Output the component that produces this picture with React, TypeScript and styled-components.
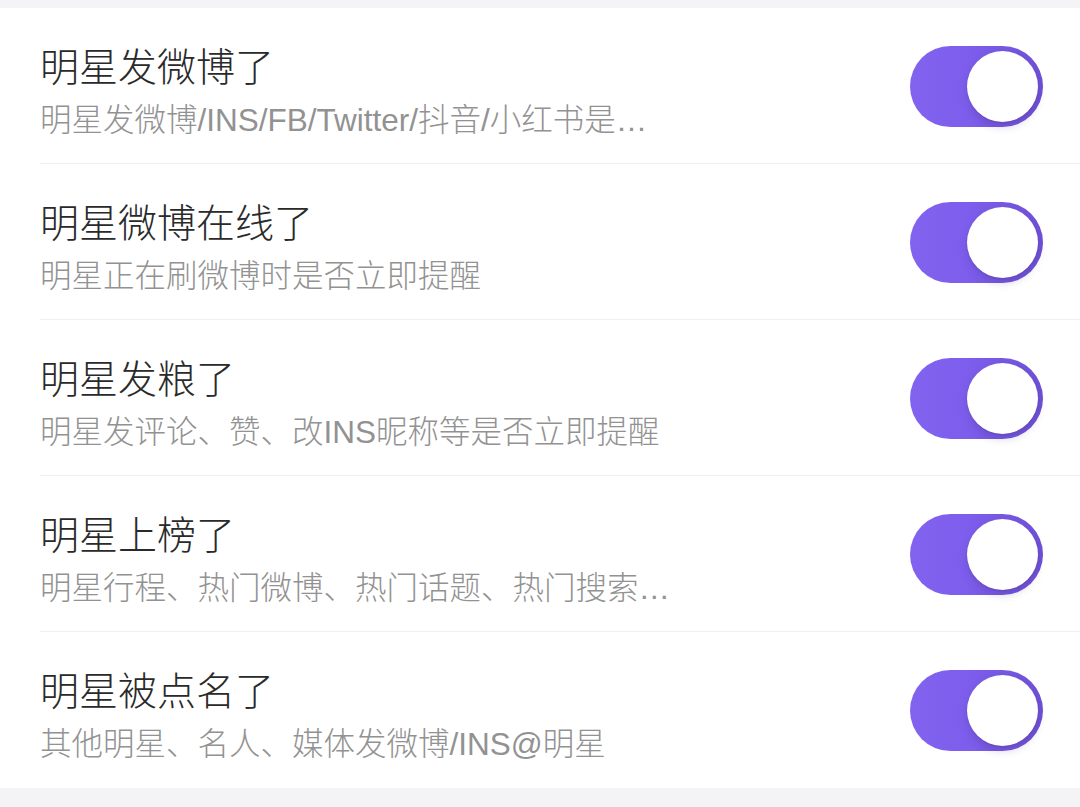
import React, { useState } from "react";
import styled, { createGlobalStyle } from "styled-components";

const GlobalStyle = createGlobalStyle`
  html, body {
    margin: 0;
    padding: 0;
    background: #f4f4f6;
  }
  body {
    font-family: "Liberation Sans", "Noto Sans CJK SC", sans-serif;
  }
`;

const Page = styled.div`
  width: 1080px;
  height: 807px;
  padding-top: 8px;
  box-sizing: border-box;
  background: #f4f4f6;
`;

const List = styled.ul`
  list-style-type: none;
  margin: 0;
  padding: 0 0 0 40px;
  background: #ffffff;
`;

const Row = styled.li<{ $last?: boolean }>`
  display: flex;
  align-items: flex-start;
  justify-content: space-between;
  height: 156px;
  box-sizing: border-box;
  padding: 34px 37px 0 0;
  border-bottom: ${(p) => (p.$last ? "none" : "1px solid #efeff1")};
`;

const Info = styled.div`
  display: flex;
  flex-direction: column;
  min-width: 0;
`;

const Title = styled.div`
  font-size: 39px;
  font-weight: 300;
  line-height: 52px;
  color: #2a2a2a;
`;

const Sub = styled.div`
  font-size: 31.5px;
  font-weight: 300;
  line-height: 52px;
  color: #929292;
  white-space: nowrap;
`;

const Track = styled.button<{ $on: boolean }>`
  position: relative;
  flex-shrink: 0;
  width: 133px;
  height: 81px;
  margin-top: 4px;
  border: none;
  padding: 0;
  border-radius: 41px;
  cursor: pointer;
  background: ${(p) =>
    p.$on ? "linear-gradient(90deg, #8263f0 0%, #7d5eec 45%, #6f50d6 100%)" : "#e5e5ea"};
`;

const Knob = styled.span<{ $on: boolean }>`
  position: absolute;
  top: 5px;
  left: ${(p) => (p.$on ? "57px" : "5px")};
  width: 71px;
  height: 71px;
  border-radius: 50%;
  background: #ffffff;
  box-shadow: 0 5px 9px rgba(60, 40, 120, 0.2), 0 1px 2px rgba(0, 0, 0, 0.1);
`;

const items = [
  { title: "明星发微博了", sub: "明星发微博/INS/FB/Twitter/抖音/小红书是…" },
  { title: "明星微博在线了", sub: "明星正在刷微博时是否立即提醒" },
  { title: "明星发粮了", sub: "明星发评论、赞、改INS昵称等是否立即提醒" },
  { title: "明星上榜了", sub: "明星行程、热门微博、热门话题、热门搜索…" },
  { title: "明星被点名了", sub: "其他明星、名人、媒体发微博/INS@明星" },
];

const App = () => {
  const [on, setOn] = useState(items.map(() => true));
  return (
    <Page>
      <GlobalStyle />
      <List>
        {items.map((item, i) => (
          <Row key={item.title} $last={i === items.length - 1}>
            <Info>
              <Title>{item.title}</Title>
              <Sub>{item.sub}</Sub>
            </Info>
            <Track
              $on={on[i]}
              onClick={() => setOn(on.map((v, j) => (j === i ? !v : v)))}
            >
              <Knob $on={on[i]} />
            </Track>
          </Row>
        ))}
      </List>
    </Page>
  );
};

export default App;
